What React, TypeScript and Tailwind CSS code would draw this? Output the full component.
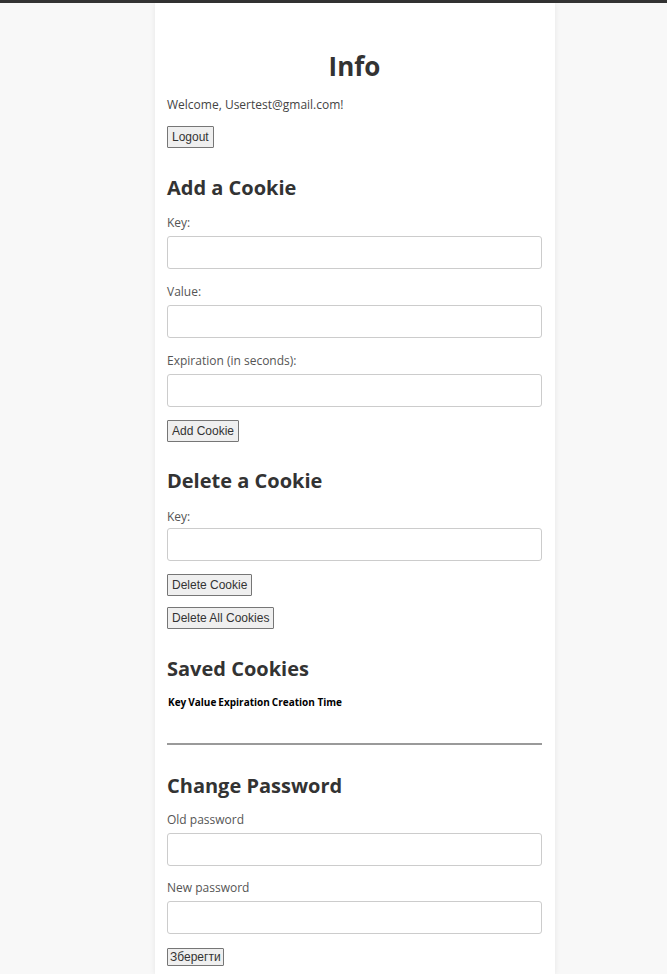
import React from "react";

const font = { fontFamily: '"Open Sans", "Liberation Sans", sans-serif' };

function Btn({ children, className = "" }: { children: React.ReactNode; className?: string }) {
  return (
    <button
      type="button"
      className={`block border border-[#767676] bg-[#efefef] text-[12px] text-[#333] rounded-[1px] ${className}`}
      style={{ fontFamily: '"Liberation Sans", Arial, sans-serif' }}
    >
      {children}
    </button>
  );
}

function Field({ label, className = "" }: { label: string; className?: string }) {
  return (
    <div className={className}>
      <label className="block text-[12px] leading-[18px] text-[#555]">{label}</label>
      <input className="mt-[4px] block h-[33px] w-full rounded-[3px] border border-[#ccc] bg-white px-2 outline-none" />
    </div>
  );
}

export default function App() {
  return (
    <div className="min-h-[974px] bg-[#f8f8f8]" style={font}>
      <div className="h-[3px] bg-[#333]" />
      <div className="ml-[155px] w-[400px] bg-white pb-[8px] pl-3 pr-[13px] pt-[45px] shadow-[0_0_6px_rgba(0,0,0,0.08)]">
        <h1 className="text-center text-[26px] font-bold leading-[36px] text-[#333]">Info</h1>
        <p className="mt-[11px] text-[12px] leading-[20px] text-[#444]">Welcome, Usertest@gmail.com!</p>
        <Btn className="mt-[11px] h-[22px] px-[4px]">Logout</Btn>

        <h2 className="mt-[26px] text-[20px] font-bold leading-[28px] text-[#333]">Add a Cookie</h2>
        <Field label="Key:" className="mt-[12px]" />
        <Field label="Value:" className="mt-[14px]" />
        <Field label="Expiration (in seconds):" className="mt-[14px]" />
        <Btn className="mt-[13px] h-[22px] px-[4px]">Add Cookie</Btn>

        <h2 className="mt-[25px] text-[20px] font-bold leading-[28px] text-[#333]">Delete a Cookie</h2>
        <div className="mt-[13px]">
          <label className="block text-[12px] leading-[18px] text-[#555]">Key:</label>
          <input className="mt-[2px] block h-[33px] w-full rounded-[3px] border border-[#ccc] bg-white px-2 outline-none" />
        </div>
        <Btn className="mt-[13px] h-[22px] px-[4px]">Delete Cookie</Btn>
        <Btn className="mt-[11px] h-[22px] px-[4px]">Delete All Cookies</Btn>

        <h2 className="mt-[26px] text-[20px] font-bold leading-[28px] text-[#333]">Saved Cookies</h2>
        <table className="mt-[12px] text-[10px] leading-[14px] text-black">
          <thead>
            <tr>
              <th className="px-[1px] font-bold">Key</th>
              <th className="px-[1px] font-bold">Value</th>
              <th className="px-[1px] font-bold">Expiration</th>
              <th className="px-[1px] font-bold">Creation Time</th>
            </tr>
          </thead>
        </table>

        <hr className="mt-[34px] border-0 border-t-2 border-[#9a9a9a]" />

        <h2 className="mt-[27px] text-[20px] font-bold leading-[28px] text-[#333]">Change Password</h2>
        <Field label="Old password" className="mt-[11px]" />
        <Field label="New password" className="mt-[13px]" />
        <Btn className="mt-[14px] h-[18px] px-[2px] leading-[14px]">Зберегти</Btn>
      </div>
    </div>
  );
}
